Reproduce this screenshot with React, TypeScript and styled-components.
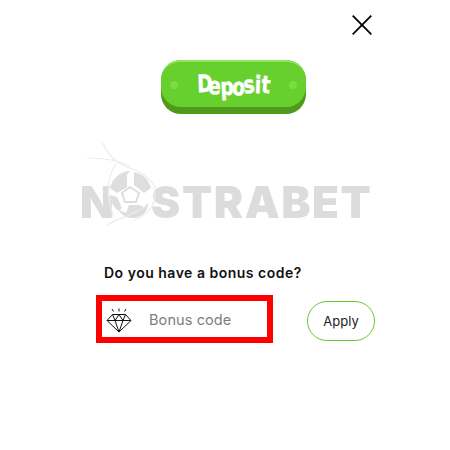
import React from "react";
import styled, { createGlobalStyle } from "styled-components";

const Global = createGlobalStyle`
  html, body { margin: 0; padding: 0; background: #fff; }
  * { box-sizing: border-box; }
`;

const Page = styled.div`
  width: 450px;
  height: 450px;
  display: flex;
  flex-direction: column;
  font-family: "Inter", "Liberation Sans", sans-serif;
  overflow: hidden;
`;

const TopBar = styled.div`
  display: flex;
  justify-content: flex-end;
  padding: 15px 78px 0 0;
  height: 60px;
`;

const CloseButton = styled.button`
  width: 20px;
  height: 20px;
  padding: 0;
  border: 0;
  background: none;
  display: block;
`;

const DepositRow = styled.div`
  display: flex;
  padding-left: 161px;
`;

const DepositButton = styled.button`
  position: relative;
  width: 145px;
  height: 54px;
  padding: 0 0 5px;
  border: 0;
  border-radius: 20px;
  background: #4f9a1c;
  display: flex;
  align-items: flex-start;
`;

const DepositFace = styled.span`
  width: 100%;
  height: 47px;
  border-radius: 20px;
  background: #67d02f;
  border-top: 2px solid #8fe65c;
  display: flex;
  align-items: center;
  justify-content: space-between;
  padding: 0 9px;
`;

const Rivet = styled.span`
  width: 8px;
  height: 8px;
  border-radius: 50%;
  background: #7ddb42;
`;

const DepositLabel = styled.span`
  display: flex;
  align-items: center;
  font-family: "DejaVu Sans", sans-serif;
  font-weight: 700;
  font-size: 24px;
  line-height: 1;
  color: #fff;
  -webkit-text-stroke: 0.5px #fff;
`;

const DepositLetter = styled.span<{ $tilt: number; $lift: number; $narrow?: boolean }>`
  display: block;
  width: ${(p) => (p.$narrow ? 6 : 11.6)}px;
  text-align: center;
  transform: translateY(${(p) => p.$lift}px) rotate(${(p) => p.$tilt}deg) scaleX(0.78);
`;

const LogoWrap = styled.div`
  position: relative;
  margin: 58px 0 0 80px;
  width: 292px;
  height: 60px;
  display: flex;
  align-items: center;
`;

const LogoText = styled.span`
  font-family: "Inter", "Liberation Sans", sans-serif;
  font-weight: 900;
  font-size: 44px;
  line-height: 1;
  letter-spacing: 1.55px;
  color: #dcdcdc;
  filter: blur(0.5px);
  white-space: nowrap;
`;

const LogoBall = styled.svg`
  position: absolute;
  left: 0;
  top: -30px;
  width: 90px;
  height: 90px;
  filter: blur(0.7px);
`;

const Question = styled.div`
  margin: 32px 0 0 104px;
  font-size: 14px;
  line-height: 18px;
  font-weight: 600;
  color: #111;
  letter-spacing: 0.5px;
`;

const BonusRow = styled.div`
  display: flex;
  align-items: flex-start;
  margin: 13px 0 0 96px;
`;

const CodeBox = styled.div`
  width: 177px;
  height: 48px;
  border: 6px solid #fe0000;
  display: flex;
  align-items: center;
  padding-left: 4px;
`;

const Gem = styled.svg`
  margin-top: 2px;
  flex: none;
`;

const CodePlaceholder = styled.span`
  margin: 1px 0 0 17px;
  font-size: 14.5px;
  color: #7d7d7d;
  letter-spacing: 0.1px;
`;

const ApplyButton = styled.button`
  margin: 6px 0 0 34px;
  width: 68px;
  height: 40px;
  border: 1px solid #67c82e;
  border-radius: 20px;
  background: #fff;
  color: #222;
  font-family: inherit;
  font-size: 13px;
  font-weight: 400;
  padding: 0;
`;

const letters: { c: string; tilt: number; lift: number; narrow?: boolean }[] = [
  { c: "D", tilt: -2, lift: -1 },
  { c: "e", tilt: 3, lift: 1 },
  { c: "p", tilt: -3, lift: 2 },
  { c: "o", tilt: 4, lift: 2 },
  { c: "s", tilt: -6, lift: 0 },
  { c: "i", tilt: 2, lift: 0, narrow: true },
  { c: "t", tilt: 5, lift: 0 },
];

export default function App() {
  return (
    <Page>
      <Global />
      <TopBar>
        <CloseButton aria-label="Close">
          <svg width="20" height="20" viewBox="0 0 20 20">
            <path d="M0.7 0.7 L19.3 19.3 M19.3 0.7 L0.7 19.3" stroke="#000" strokeWidth="1.8" fill="none" />
          </svg>
        </CloseButton>
      </TopBar>
      <DepositRow>
        <DepositButton>
          <DepositFace>
            <Rivet />
            <DepositLabel>
              {letters.map((l, i) => (
                <DepositLetter key={i} $tilt={l.tilt} $lift={l.lift} $narrow={l.narrow}>{l.c}</DepositLetter>
              ))}
            </DepositLabel>
            <Rivet />
          </DepositFace>
        </DepositButton>
      </DepositRow>
      <LogoWrap>
        <LogoText>NOSTRABET</LogoText>
        <LogoBall viewBox="0 0 90 90" fill="none">
          <circle cx="50" cy="50" r="21" fill="#fff" />
          <path d="M50 29 C40 29 32 37 30 46 L37 51 L47 45 L47 33 Z" fill="#dedede" />
          <path d="M54 30 L54 43 L64 51 L71 46 C69 38 63 32 54 30 Z" fill="#dedede" />
          <path d="M30 53 L37 55 L42 66 L39 69 C33 65 30 59 30 53 Z" fill="#dedede" />
          <path d="M46 71 L49 63 L59 63 L64 65 C59 70 52 72 46 71 Z" fill="#dedede" />
          <path d="M50 45 L59 51 L56 60 L45 60 L42 51 Z" stroke="#dedede" strokeWidth="2" />
          <path d="M23 1 C28 14 38 22 50 26 C60 30 68 34 76 46 M7 16 C24 16 38 18 50 24 M36 22 C26 36 26 56 34 76 M74 46 C78 60 70 72 54 78 M26 84 C36 76 46 76 60 68" stroke="#ececec" strokeWidth="1.2" />
        </LogoBall>
      </LogoWrap>
      <Question>Do you have a bonus code?</Question>
      <BonusRow>
        <CodeBox>
          <Gem width="26" height="25" viewBox="0 0 26 25" fill="none" stroke="#111" strokeWidth="1">
            <path d="M6.5 6.5 H19.5 L25 12.5 L13 24 L1 12.5 Z M1 12.5 H25 M6.5 6.5 L9 12.5 L13 24 L17 12.5 L19.5 6.5 M9 12.5 L13 6.5 L17 12.5" />
            <path d="M6 1 L7.5 3.5 M13 0.5 V3.5 M20 1 L18.5 3.5" />
          </Gem>
          <CodePlaceholder>Bonus code</CodePlaceholder>
        </CodeBox>
        <ApplyButton>Apply</ApplyButton>
      </BonusRow>
    </Page>
  );
}
